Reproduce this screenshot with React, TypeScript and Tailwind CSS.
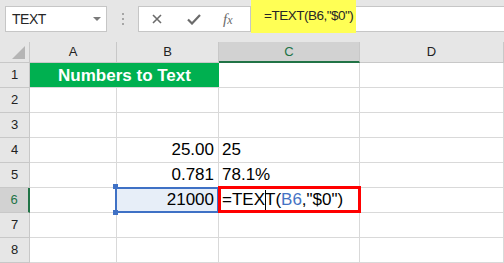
// App.tsx — Excel-style sheet showing =TEXT(B6,"$0") with the formula bar highlighted.
const hdr = "flex items-center justify-center bg-[#e6e6e6] text-[13px] text-[#222] border-r border-b border-[#c8c8c8]";
const cell = "flex items-center border-r border-b border-[#d9d9d9] text-[17px] text-black whitespace-nowrap";

type Row = { n: number; a?: string; b?: string; c?: string };

const rows: Row[] = [
  { n: 2 },
  { n: 3 },
  { n: 4, b: "25.00", c: "25" },
  { n: 5, b: "0.781", c: "78.1%" },
];

function FormulaBar() {
  return (
    <div className="flex h-[42px] bg-[#e6e6e6] text-[#262626]">
      <div className="mt-[6px] ml-[5px] flex h-[26px] w-[102px] items-center justify-between border border-[#c6c6c6] bg-white pl-[6px] pr-[5px]">
        <span className="text-[14px] tracking-[-0.5px]">TEXT</span>
        <svg width="8" height="4" viewBox="0 0 8 4">
          <polygon points="0,0 8,0 4,4" fill="#7a7a7a" />
        </svg>
      </div>
      <div className="flex w-[31px] flex-col items-center gap-[3px] pt-[13px]">
        <span className="h-[2px] w-[2px] bg-[#a6a6a6]" />
        <span className="h-[2px] w-[2px] bg-[#a6a6a6]" />
        <span className="h-[2px] w-[2px] bg-[#a6a6a6]" />
      </div>
      <div className="mt-[6px] flex h-[26px] w-[113px] items-center border border-[#c6c6c6] bg-white">
        <svg className="ml-[13px]" width="10" height="10" viewBox="0 0 10 10">
          <path d="M1 1 L9 9 M9 1 L1 9" stroke="#6b6b6b" strokeWidth="1.6" />
        </svg>
        <svg className="ml-[25px]" width="14" height="11" viewBox="0 0 14 11">
          <path d="M1 5.5 L5 9.5 L13 1" stroke="#6b6b6b" strokeWidth="2.2" fill="none" />
        </svg>
        <span className="ml-[22px] font-['Liberation_Serif',serif] text-[15px] italic text-[#6b6b6b]">
          f<span className="text-[12px]">x</span>
        </span>
      </div>
      <div className="flex flex-1">
        <div className="flex h-[33px] w-[105px] items-center bg-[#ffff55] pl-[13px] text-[13.5px] tracking-[-0.5px]">
          =TEXT(B6,"$0")
        </div>
        <div className="mt-[6px] h-[26px] flex-1 border-y border-[#c6c6c6] bg-white" />
      </div>
    </div>
  );
}

export default function App() {
  return (
    <div className="h-[263px] w-[504px] overflow-hidden bg-white font-['Liberation_Sans',Arial,sans-serif]">
      <FormulaBar />
      <div className="grid grid-cols-[30px_87px_102px_141px_1fr] grid-rows-[21px_repeat(8,25px)]">
        <div className="flex items-end justify-end border-r border-b border-[#c8c8c8] bg-[#e6e6e6] pr-[4px] pb-[3px]">
          <svg width="13" height="13" viewBox="0 0 13 13">
            <polygon points="13,0 13,13 0,13" fill="#b5b5b5" />
          </svg>
        </div>
        <div className={hdr}>A</div>
        <div className={hdr}>B</div>
        <div className="flex items-center justify-center border-r border-b-2 border-r-[#c8c8c8] border-b-[#217346] bg-[#d2d2d2] text-[13px] text-[#217346]">
          C
        </div>
        <div className={hdr}>D</div>

        {/* row 1: merged title */}
        <div className={hdr}>1</div>
        <div className="col-span-2 flex items-center justify-center border-b border-[#d9d9d9] bg-[#00b050] pt-[2px] text-[17px] font-bold text-white">
          Numbers to Text
        </div>
        <div className={cell} />
        <div className={cell} />

        {rows.map((r) => (
          <div key={r.n} className="contents">
            <div className={hdr}>{r.n}</div>
            <div className={cell} />
            <div className={`${cell} justify-end pr-[4px]`}>{r.b}</div>
            <div className={`${cell} pl-[3px]`}>{r.c}</div>
            <div className={cell} />
          </div>
        ))}

        {/* row 6: selected B6, edited C6 */}
        <div className="flex items-center justify-center border-r-2 border-b border-r-[#217346] border-b-[#c8c8c8] bg-[#d2d2d2] text-[13px] text-[#217346]">
          6
        </div>
        <div className={cell} />
        <div className={`${cell} relative justify-end bg-[#e7eef8] pr-[4px]`}>
          21000
          <div className="absolute -top-[1px] -right-[1px] -bottom-[1px] -left-[2px] border-2 border-[#3f71c5]" />
          <div className="absolute -top-[4px] -left-[4px] h-[5px] w-[5px] bg-[#3f71c5]" />
          <div className="absolute -bottom-[3px] -left-[4px] h-[5px] w-[5px] bg-[#3f71c5]" />
        </div>
        <div className={`${cell} relative pl-[3px] text-[16.5px]`}>
          =TEX
          <span className="mx-[-0.5px] inline-block h-[20px] w-px bg-black" />
          T(<span className="text-[#4472c4]">B6</span>,"$0")
          <div className="absolute -top-[2px] -left-[1px] h-[27px] w-[143px] border-[3px] border-[#ff0000]" />
        </div>
        <div className={cell} />

        {[7, 8].map((n) => (
          <div key={n} className="contents">
            <div className={hdr}>{n}</div>
            <div className={cell} />
            <div className={cell} />
            <div className={cell} />
            <div className={cell} />
          </div>
        ))}
      </div>
    </div>
  );
}
